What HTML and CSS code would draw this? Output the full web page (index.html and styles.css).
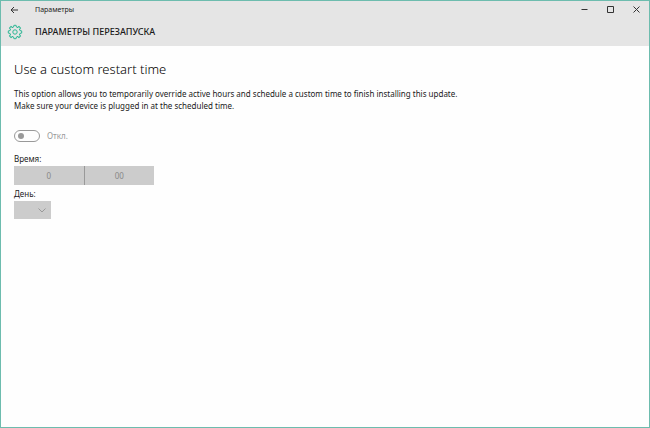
FILE: index.html
```html
<!DOCTYPE html>
<html lang="ru">
<head>
  <meta charset="UTF-8">
  <meta name="viewport" content="width=device-width, initial-scale=1.0">
  <title>Параметры</title>
  <link rel="stylesheet" href="styles.css">
</head>
<body>
  <div class="window">
    <header class="header">
      <div class="titlebar">
        <button class="back" aria-label="Назад">
          <svg width="8" height="8" viewBox="0 0 8 8"><path d="M8 4H1M4 1L1 4l3 3"/></svg>
        </button>
        <span class="title">Параметры</span>
        <div class="controls">
          <button aria-label="Свернуть">
            <svg width="7" height="7" viewBox="0 0 7 7"><path d="M0.5 3.5h6"/></svg>
          </button>
          <button aria-label="Развернуть">
            <svg width="7" height="7" viewBox="0 0 7 7"><path d="M0.5 0.5h6v6h-6z"/></svg>
          </button>
          <button aria-label="Закрыть">
            <svg width="7" height="7" viewBox="0 0 7 7"><path d="M0.5 0.5l6 6M6.5 0.5l-6 6"/></svg>
          </button>
        </div>
      </div>
      <div class="section">
        <svg class="gear" width="16" height="16" viewBox="-8 -8 16 16">
          <defs>
            <path id="tooth" d="M-1.91 -4.62L-1.4 -5L-1.1 -6.7H1.1L1.4 -5L1.91 -4.62"/>
          </defs>
          <use href="#tooth"/>
          <use href="#tooth" transform="rotate(45)"/>
          <use href="#tooth" transform="rotate(90)"/>
          <use href="#tooth" transform="rotate(135)"/>
          <use href="#tooth" transform="rotate(180)"/>
          <use href="#tooth" transform="rotate(225)"/>
          <use href="#tooth" transform="rotate(270)"/>
          <use href="#tooth" transform="rotate(315)"/>
          <circle r="2.2"/>
        </svg>
        <h1>ПАРАМЕТРЫ ПЕРЕЗАПУСКА</h1>
      </div>
    </header>

    <main class="content">
      <h2>Use a custom restart time</h2>
      <p>This option allows you to temporarily override active hours and schedule a custom time to finish installing this update.<br>Make sure your device is plugged in at the scheduled time.</p>

      <label class="toggle">
        <input type="checkbox" role="switch" disabled>
        <span>Откл.</span>
      </label>

      <label class="label" for="time">Время:</label>
      <button class="time" id="time" disabled>
        <span>0</span>
        <span>00</span>
      </button>

      <label class="label" for="day">День:</label>
      <div class="day">
        <select id="day" disabled></select>
        <svg width="8" height="5" viewBox="0 0 8 5"><path d="M0.5 0.5L4 4l3.5-3.5"/></svg>
      </div>
    </main>
  </div>
</body>
</html>
```

FILE: styles.css
```css
* {
  box-sizing: border-box;
}
body {
  margin: 0;
  font-family: "Noto Sans", "Open Sans", sans-serif;
  font-size: 8px;
  line-height: 12px;
  color: #1a1a1a;
}
button {
  padding: 0;
  border: none;
  background: none;
  font: inherit;
}
svg {
  display: block;
  fill: none;
  stroke: #333;
}
.window {
  min-height: 100vh;
  border: 1px solid #6dbcae;
  background-color: #fefefe;
}
.header {
  background-color: #e5e5e5;
}
.titlebar {
  display: flex;
  align-items: center;
  height: 17px;
}
.back {
  display: flex;
  justify-content: center;
  width: 26px;
}
.title {
  margin-left: 8px;
  font-size: 7px;
}
.controls {
  display: flex;
  margin-left: auto;
}
.controls button {
  display: flex;
  justify-content: center;
  width: 26px;
}
.section {
  display: flex;
  align-items: center;
  gap: 12px;
  height: 28px;
  padding: 0 6px;
}
.gear {
  stroke: #2fb795;
}
h1 {
  margin: 0;
  font-size: 9px;
  font-weight: 500;
}
.content {
  padding: 14px 13px;
}
h2 {
  margin: 0 0 10px;
  font-size: 13px;
  font-weight: 300;
  line-height: 18px;
  color: #000;
}
p {
  margin: 0 0 18px;
}
.toggle {
  display: flex;
  align-items: center;
  gap: 7px;
  margin-bottom: 11px;
  color: #999;
}
.toggle input {
  display: flex;
  align-items: center;
  appearance: none;
  width: 26px;
  height: 12px;
  margin: 0;
  padding: 0 3px;
  border: 1px solid #999;
  border-radius: 6px;
}
.toggle input::before {
  content: "";
  width: 6px;
  height: 6px;
  border-radius: 50%;
  background-color: #999;
}
.label {
  display: block;
  margin-bottom: 1px;
}
.time {
  display: flex;
  width: 140px;
  height: 19px;
  margin-bottom: 3px;
  background-color: #ccc;
  color: #888;
  line-height: 19px;
}
.time span {
  flex: 1;
}
.time span + span {
  border-left: 1px solid #999;
}
.day {
  display: grid;
  align-items: center;
  width: 37px;
}
.day select,
.day svg {
  grid-area: 1 / 1;
}
.day select {
  appearance: none;
  width: 100%;
  height: 18px;
  border: none;
  border-radius: 0;
  background-color: #ccc;
  opacity: 1;
}
.day svg {
  justify-self: end;
  margin-right: 5px;
  stroke: #999;
  z-index: 1;
}
```
